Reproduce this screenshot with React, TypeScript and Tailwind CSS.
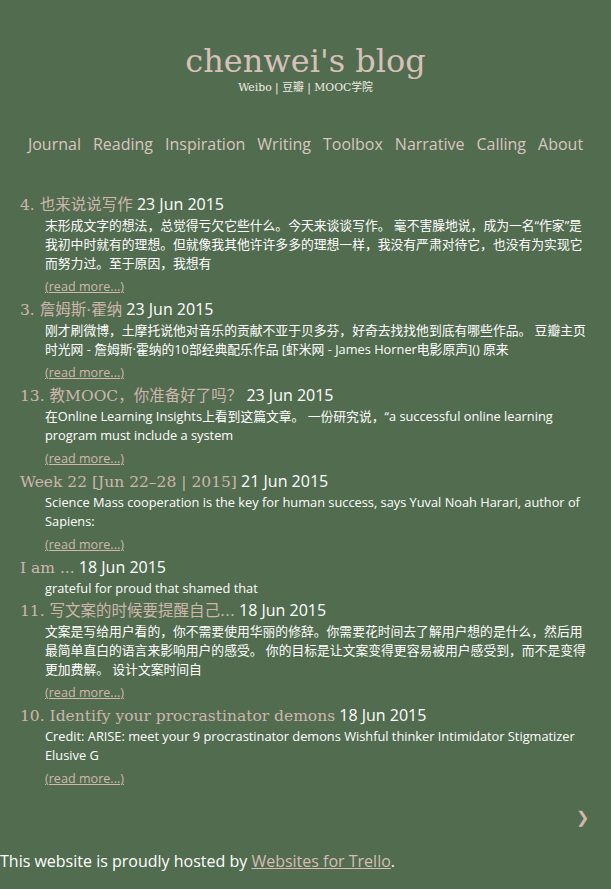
import React from 'react';

type Post = {
  title: string;
  date: string;
  excerpt: string;
  more?: boolean;
};

const POSTS: Post[] = [
  {
    title: '4. 也来说说写作',
    date: '23 Jun 2015',
    excerpt: '末形成文字的想法，总觉得亏欠它些什么。今天来谈谈写作。 毫不害臊地说，成为一名“作家”是我初中时就有的理想。但就像我其他许许多多的理想一样，我没有严肃对待它，也没有为实现它而努力过。至于原因，我想有',
    more: true,
  },
  {
    title: '3. 詹姆斯·霍纳',
    date: '23 Jun 2015',
    excerpt: '刚才刷微博，土摩托说他对音乐的贡献不亚于贝多芬，好奇去找找他到底有哪些作品。 豆瓣主页 时光网 - 詹姆斯·霍纳的10部经典配乐作品 [虾米网 - James Horner电影原声]() 原来',
    more: true,
  },
  {
    title: '13. 教MOOC，你准备好了吗？',
    date: '23 Jun 2015',
    excerpt: '在Online Learning Insights上看到这篇文章。 一份研究说，“a successful online learning program must include a system',
    more: true,
  },
  {
    title: 'Week 22 [Jun 22–28 | 2015]',
    date: '21 Jun 2015',
    excerpt: 'Science Mass cooperation is the key for human success, says Yuval Noah Harari, author of Sapiens:',
    more: true,
  },
  {
    title: 'I am ...',
    date: '18 Jun 2015',
    excerpt: 'grateful for proud that shamed that',
  },
  {
    title: '11. 写文案的时候要提醒自己...',
    date: '18 Jun 2015',
    excerpt: '文案是写给用户看的，你不需要使用华丽的修辞。你需要花时间去了解用户想的是什么，然后用最简单直白的语言来影响用户的感受。 你的目标是让文案变得更容易被用户感受到，而不是变得更加费解。 设计文案时间自',
    more: true,
  },
  {
    title: '10. Identify your procrastinator demons',
    date: '18 Jun 2015',
    excerpt: 'Credit: ARISE: meet your 9 procrastinator demons Wishful thinker Intimidator Stigmatizer Elusive G',
    more: true,
  },
];

const NAV = ['Journal', 'Reading', 'Inspiration', 'Writing', 'Toolbox', 'Narrative', 'Calling', 'About'];

const serif = "font-['DejaVu_Serif','Noto_Sans_CJK_SC',serif]";
const sans = "font-['Open_Sans','Noto_Sans_CJK_SC',sans-serif]";

export default function App() {
  return (
    <div className={`min-h-[889px] w-full bg-[#526c4f] text-white ${sans}`}>
      <header className="flex flex-col items-center pt-[39px]">
        <h1 className={`${serif} text-[32px] leading-[44px] text-[#d6c0b9]`}>chenwei's blog</h1>
        <div className={`${serif} -mt-[2px] text-[10.8px] leading-[14px] text-[#f1ece4]`}>
          Weibo | 豆瓣 | MOOC学院
        </div>
      </header>

      <nav className="mt-[37px] flex justify-center gap-[12px] px-[20px] text-[16px] leading-[24px] text-[#d9c6c0]">
        {NAV.map(n => (
          <a key={n} href="#" className="hover:underline">{n}</a>
        ))}
      </nav>

      <main className="mt-[36px] px-[20px]">
        {POSTS.map(p => (
          <article key={p.title + p.date}>
            <h2 className="text-[16px] leading-[24px]">
              <a href="#" className={`${serif} text-[15.5px] leading-[16px] text-[#cdb6ae]`}>{p.title}</a>{' '}
              <span className={`${sans} leading-[16px] text-white`}>{p.date}</span>
            </h2>
            <p className="ml-[25px] text-[12.8px] leading-[19px] text-white">{p.excerpt}</p>
            {p.more && (
              <a href="#" className="ml-[25px] mt-[3px] inline-block text-[12.6px] leading-[20px] text-[#d0b8b0] underline">(read more...)</a>
            )}
          </article>
        ))}

        <div className="mt-[16px] flex justify-end pr-[2px] text-[16px] text-[#d0b8b0]">❯</div>
      </main>

      <footer className="mt-[20px] text-[16px] leading-[24px] text-white">
        This website is proudly hosted by{' '}
        <a href="#" className="text-[#d6bcb6] underline">Websites for Trello</a>.
      </footer>
    </div>
  );
}
